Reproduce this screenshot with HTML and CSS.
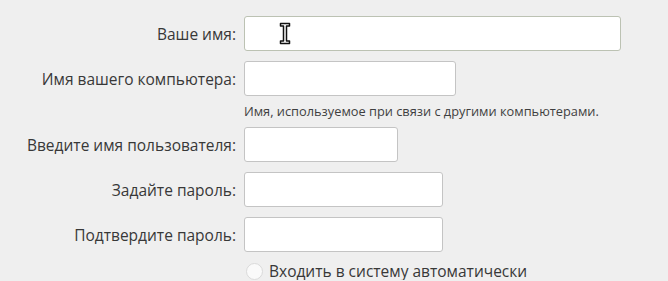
FILE: index.html
```html
<!DOCTYPE html>
<html lang="ru">
<head>
    <meta charset="UTF-8">
    <title>Кто вы?</title>
    <link rel="stylesheet" href="styles.css">
</head>
<body>
    <div class="form">
        <label class="label" for="name">Ваше имя:</label>
        <div class="field-wrap">
            <input class="field field-name focused" id="name" type="text">
            <svg class="ibeam" width="12" height="23" viewBox="0 0 12 23">
                <path d="M1.5 1.5h9v2.6h-3v14.8h3v2.6h-9v-2.6h3v-14.8h-3z" fill="#fff" stroke="#111" stroke-width="1.5" stroke-linejoin="round"/>
            </svg>
        </div>

        <label class="label" for="host">Имя вашего компьютера:</label>
        <input class="field field-host" id="host" type="text">
        <div></div>
        <p class="hint">Имя, используемое при связи с другими компьютерами.</p>

        <label class="label" for="user">Введите имя пользователя:</label>
        <input class="field field-user" id="user" type="text">

        <label class="label" for="pass">Задайте пароль:</label>
        <input class="field field-pass" id="pass" type="password">

        <label class="label" for="pass2">Подтвердите пароль:</label>
        <input class="field field-pass" id="pass2" type="password">

        <div></div>
        <label class="auto">
            <span class="radio"></span>
            Входить в систему автоматически
        </label>
    </div>
</body>
</html>
```

FILE: styles.css
```css
body {
    margin: 0;
    background: #efefef;
    font-family: "Open Sans", "Noto Sans", sans-serif;
    color: #383838;
}
.form {
    display: grid;
    grid-template-columns: 236px auto;
    column-gap: 8px;
    row-gap: 10px;
    align-items: center;
    padding-top: 16px;
}
.label {
    text-align: right;
    font-size: 15.5px;
    white-space: nowrap;
}
.field-wrap {
    position: relative;
}
.field {
    box-sizing: border-box;
    height: 35px;
    margin: 0;
    background: #fff;
    border: 1px solid #c4c4c4;
    border-radius: 3px;
    outline: none;
    display: block;
}
.field.focused {
    border-color: #bcc2b3;
}
.field-name { width: 377px; }
.field-host { width: 212px; }
.field-user { width: 154px; }
.field-pass { width: 199px; }
.ibeam {
    position: absolute;
    left: 35px;
    top: 6px;
}
.hint {
    margin: -2px 0 0;
    height: 13px;
    line-height: 15px;
    font-size: 12.8px;
    color: #3f3f3f;
    white-space: nowrap;
}
.auto {
    display: flex;
    align-items: center;
    gap: 6px;
    font-size: 15.5px;
    line-height: 18px;
    margin-left: 2px;
    white-space: nowrap;
}
.radio {
    width: 15px;
    height: 15px;
    border-radius: 50%;
    background: #fafafa;
    border: 1px solid #dadada;
}
```
